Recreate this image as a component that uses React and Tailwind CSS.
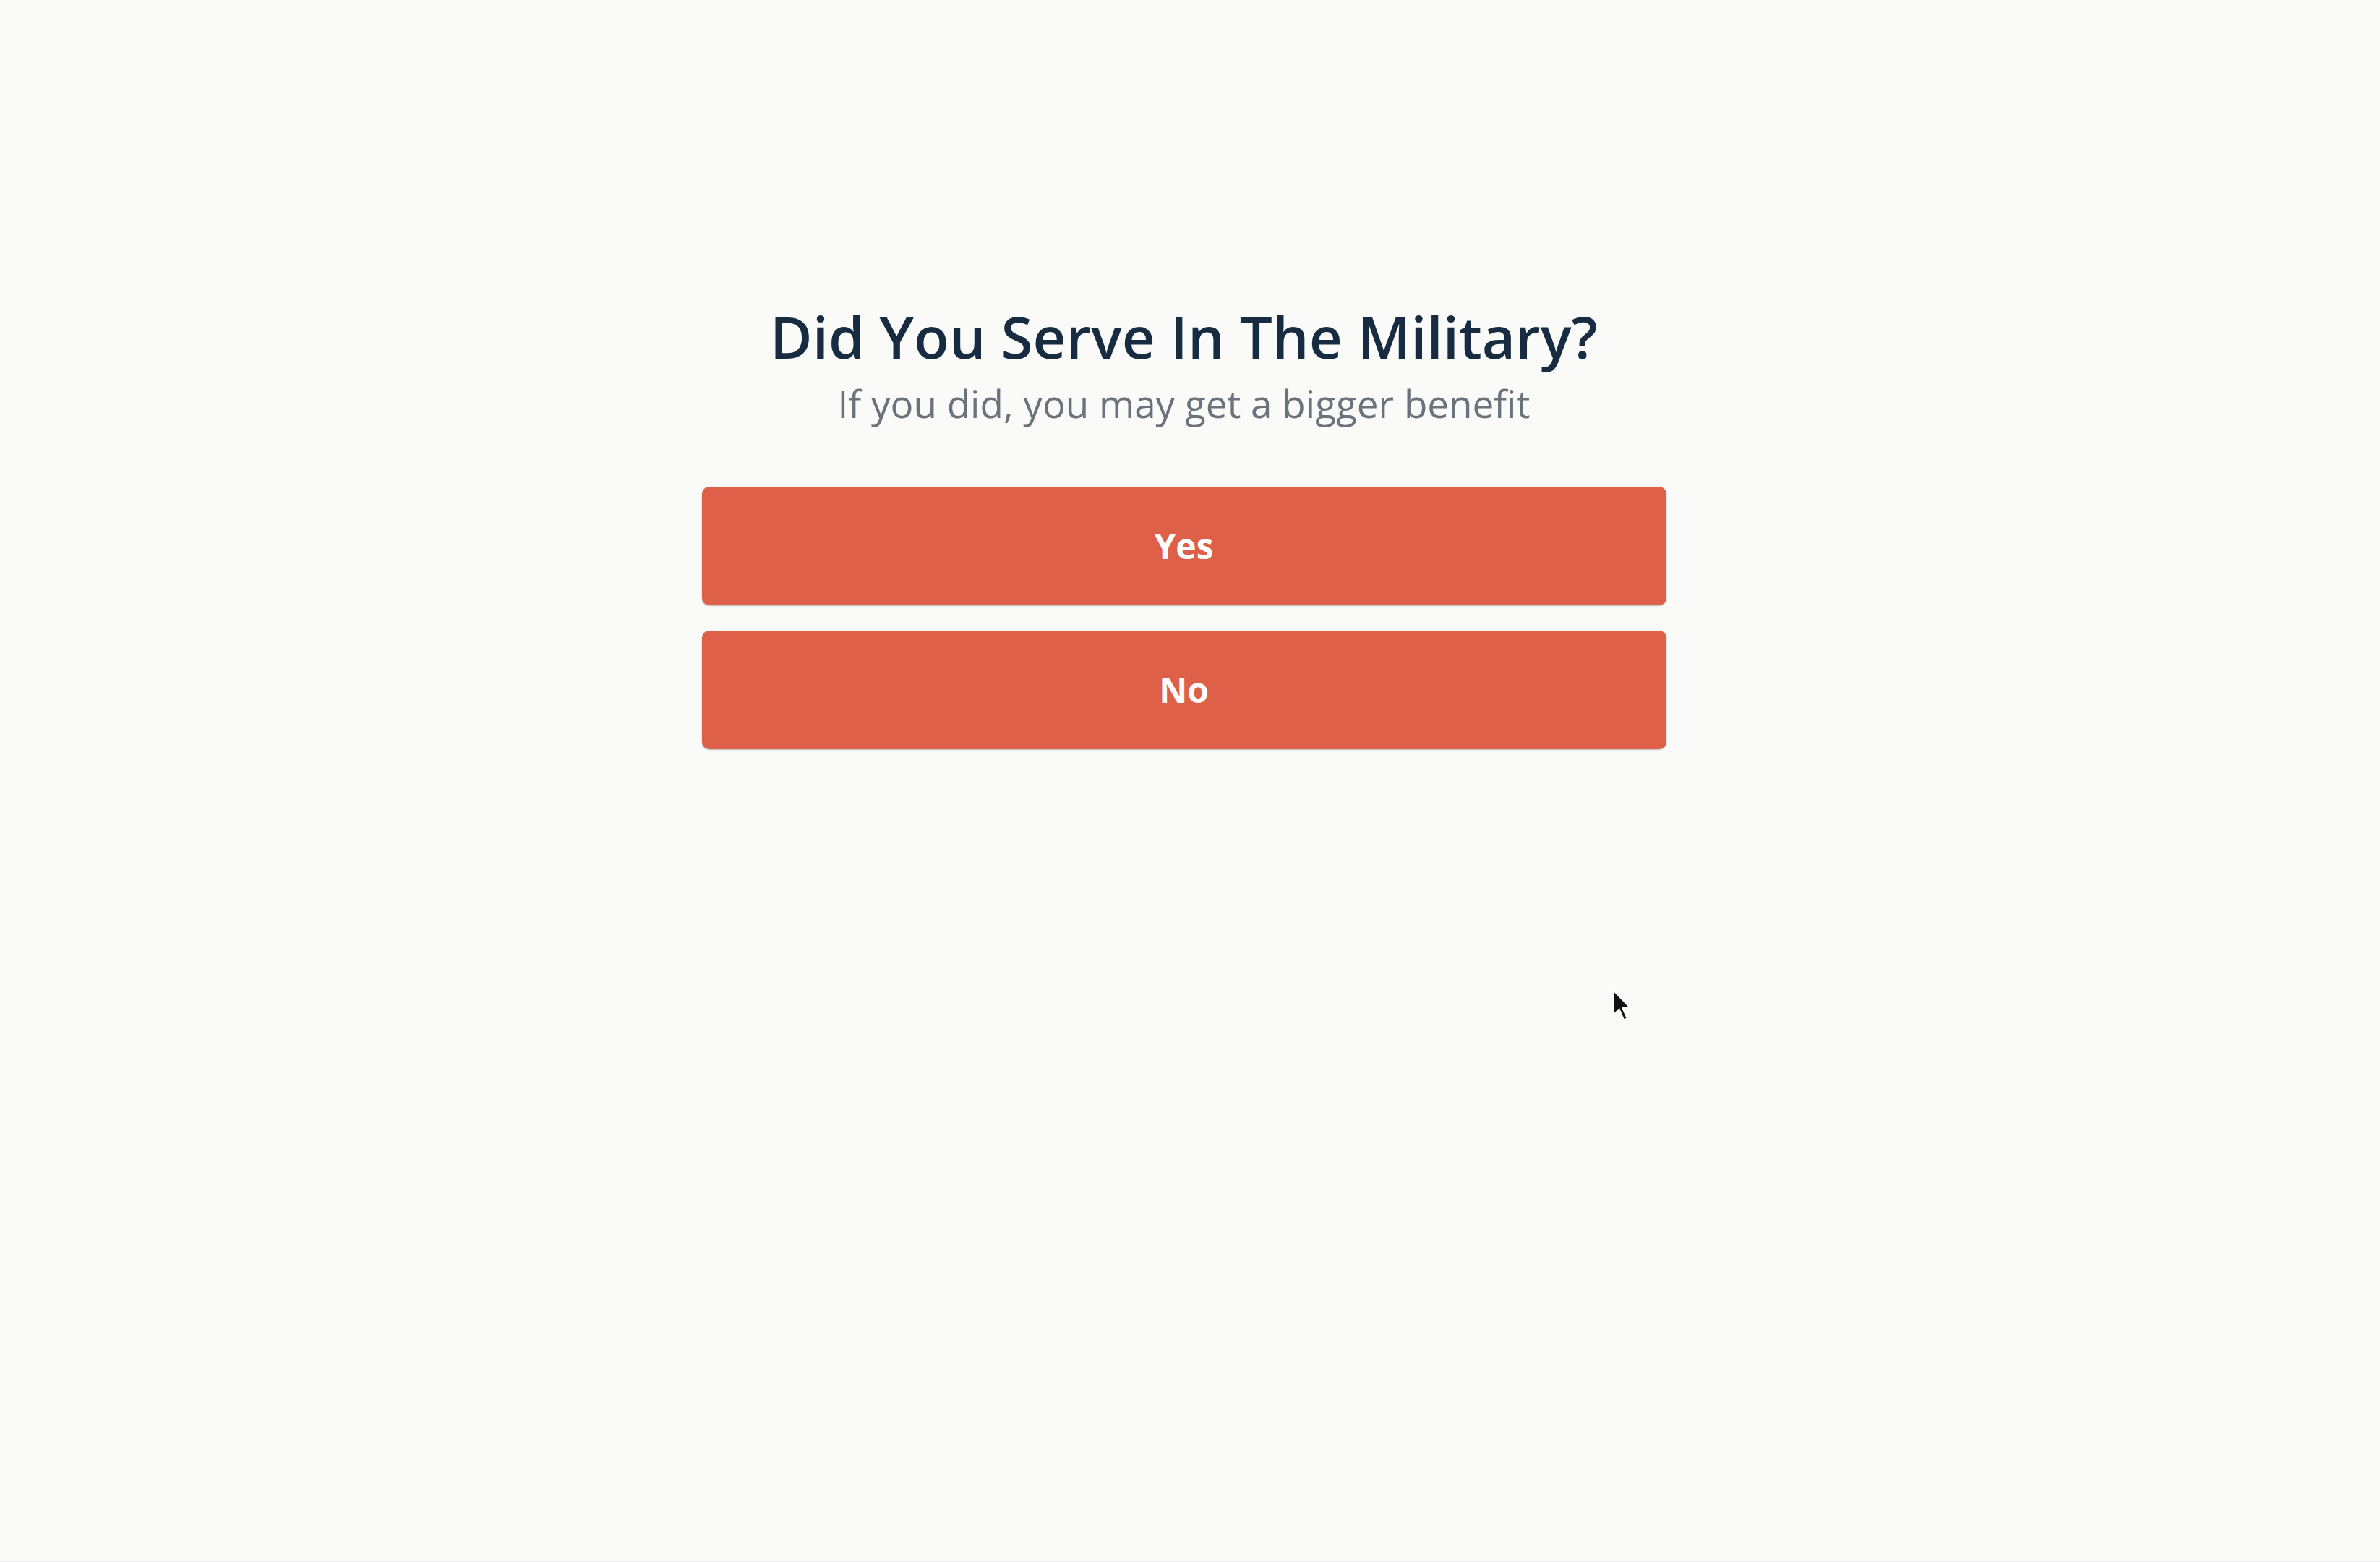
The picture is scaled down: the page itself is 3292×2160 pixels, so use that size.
import React from 'react';

// Pointer cursor overlay, as seen in the capture
function Cursor() {
  return (
    <svg width="28" height="48" viewBox="0 0 13 22" className="absolute left-[2230px] top-[1368px]">
      <path d="M1 1 L1 16 L4.5 12.5 L7.5 19.5 L9.5 18.6 L6.6 11.8 L11.5 11.8 Z" fill="#111" stroke="#fff" strokeWidth="0.8" strokeLinejoin="round" />
    </svg>
  );
}

export default function App() {
  const options = ['Yes', 'No'];

  return (
    <div className="relative w-full h-[2160px] bg-[#fafaf9] font-['Open_Sans',sans-serif] border-b border-[#ececec]">
      <div className="flex flex-col items-center pt-[417px] pr-[17px]">
        {/* Question */}
        <h1 className="text-[80px] leading-[1.2] font-semibold text-[#172c40]">
          Did You Serve In The Military?
        </h1>
        <p className="text-[53px] leading-[1.2] text-[#6a737c] mt-[13px]">
          If you did, you may get a bigger benefit
        </p>

        {/* Answers */}
        <div className="flex flex-col gap-[35px] w-[1334px] mt-[83px]">
          {options.map((opt) => (
            <button
              key={opt}
              className="h-[164px] w-full rounded-[10px] bg-[#df6048] text-white text-[48px] font-bold shadow-[0_1px_2px_rgba(0,0,0,0.25)]"
            >
              {opt}
            </button>
          ))}
        </div>
      </div>
      <Cursor />
    </div>
  );
}
